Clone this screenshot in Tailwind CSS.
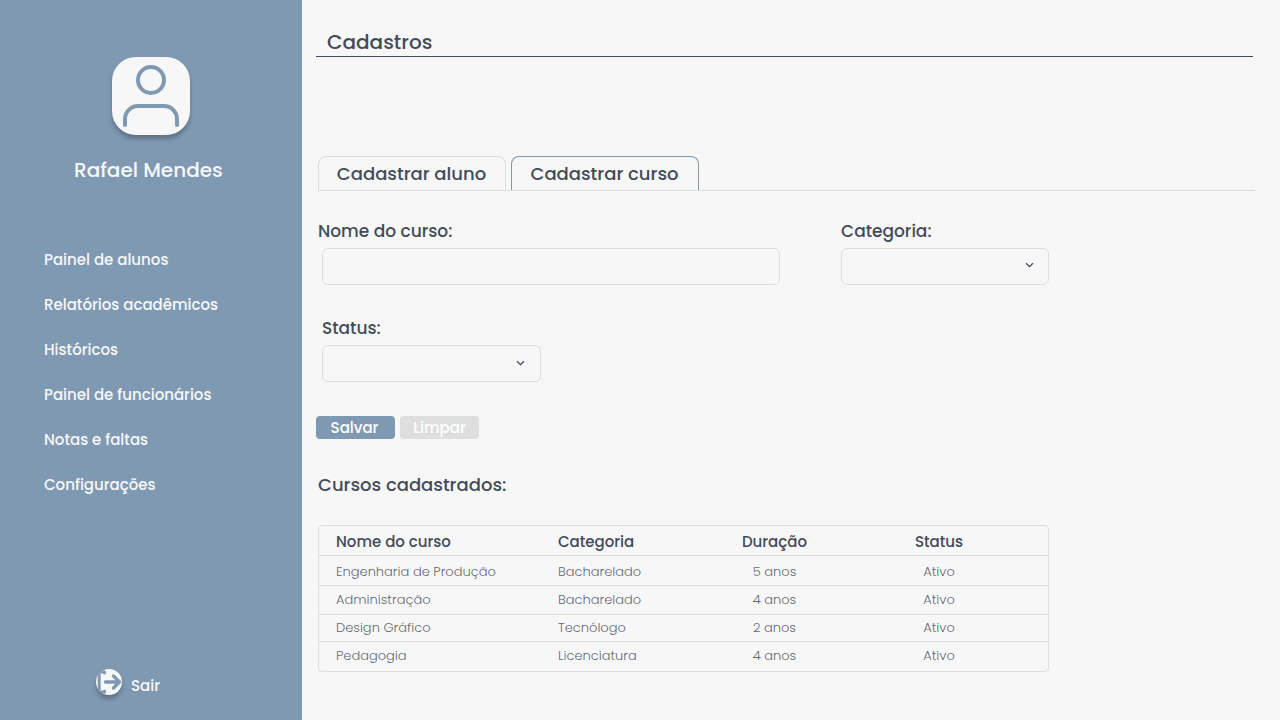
<!DOCTYPE html>
<html lang="pt-BR">
<head>
<meta charset="utf-8">
<meta name="viewport" content="width=device-width, initial-scale=1">
<title>Cadastros</title>
<script src="https://cdn.jsdelivr.net/npm/@tailwindcss/browser@4"></script>
</head>
<body class="flex min-h-screen bg-[#f7f7f7] font-['Poppins','Inter',sans-serif] font-medium text-[#434b57] antialiased">
<aside class="flex w-[302px] shrink-0 flex-col bg-[#7f99b2] text-[#f7f7f7]">
  <div class="mt-[57px] ml-28 size-[78px] rounded-3xl bg-[#f7f7f7] shadow-[0_4px_4px_rgba(0,0,0,0.25)]">
    <svg viewBox="0 0 78 78" class="size-full" fill="none" stroke="#7f99b2" stroke-width="4" stroke-linecap="round" aria-hidden="true">
      <circle cx="39" cy="23" r="13"/>
      <path d="M13 68v-6a13 13 0 0 1 13-13h26a13 13 0 0 1 13 13v6"/>
    </svg>
  </div>
  <p class="mt-5 pl-[74px] text-[20px] leading-[30px]">Rafael Mendes</p>
  <nav class="mt-[63px] flex flex-col gap-[21px] pl-11 text-[15px] leading-6">
    <a href="#">Painel de alunos</a>
    <a href="#">Relatórios acadêmicos</a>
    <a href="#">Históricos</a>
    <a href="#">Painel de funcionários</a>
    <a href="#">Notas e faltas</a>
    <a href="#">Configurações</a>
  </nav>
  <a href="#" class="mt-auto mb-[22px] ml-24 flex items-end gap-[9px] text-[15px] leading-6">
    <span class="mb-[3px] size-[26px] overflow-hidden rounded-full bg-[#f7f7f7] shadow-[0_4px_4px_rgba(0,0,0,0.25)]">
      <svg viewBox="0 0 26 26" class="size-full" fill="none" stroke="#7f99b2" stroke-width="3" stroke-linecap="round" stroke-linejoin="round" aria-hidden="true">
        <path d="M8.500 4V3H3.200v20h5.300v-1"/>
        <path d="M9.500 13h14M17.500 7l6 6-6 6" stroke-width="3.400"/>
      </svg>
    </span>
    Sair
  </a>
</aside>
<main class="flex-1 pr-[27px] pl-[14px]">
  <h1 class="border-b border-[#434b63] pt-7 pl-[11px] text-[20px] leading-7">Cadastros</h1>
  <div role="tablist" class="mt-[99px] -mr-[2px] ml-[2px] flex gap-[5px] border-b border-[#dedede] text-[18px] leading-[33px]">
    <button role="tab" aria-selected="false" class="w-[188px] rounded-t-lg border border-b-0 border-[#dedede] pr-px">Cadastrar aluno</button>
    <button role="tab" aria-selected="true" class="w-[188px] rounded-t-lg border border-b-0 border-[#7f99b2] pr-px">Cadastrar curso</button>
  </div>
  <form>
    <div class="mt-[27px] flex gap-[61px]">
      <div class="w-[464px] shrink pl-[2px]">
        <label for="nome" class="block text-[17px] leading-[26px]">Nome do curso:</label>
        <input id="nome" type="text" class="mt-1 ml-1 block h-[37px] w-[458px] rounded-md border border-[#dedede] px-3">
      </div>
      <div class="w-52">
        <label for="categoria" class="block text-[17px] leading-[26px]">Categoria:</label>
        <div class="relative mt-1">
          <select id="categoria" class="block h-[37px] w-full appearance-none rounded-md border border-[#dedede] px-3"><option></option><option>Bacharelado</option><option>Tecnólogo</option><option>Licenciatura</option></select>
          <svg viewBox="0 0 10 6" class="pointer-events-none absolute top-[14px] right-[14px] h-[6px] w-[10px]" fill="none" stroke="currentColor" stroke-width="1.300" aria-hidden="true"><path d="M1 1.200 4.500 4.700 8 1.200"/></svg>
        </div>
      </div>
    </div>
    <div class="mt-[30px] ml-[6px] w-[219px]">
      <label for="status" class="block text-[17px] leading-[26px]">Status:</label>
      <div class="relative mt-1">
        <select id="status" class="block h-[37px] w-full appearance-none rounded-md border border-[#dedede] px-3"><option></option><option>Ativo</option><option>Inativo</option></select>
        <svg viewBox="0 0 10 6" class="pointer-events-none absolute top-[15px] right-[15px] h-[6px] w-[10px]" fill="none" stroke="currentColor" stroke-width="1.300" aria-hidden="true"><path d="M1 1.200 4.500 4.700 8 1.200"/></svg>
      </div>
    </div>
    <div class="mt-[34px] flex gap-[5px] text-[15px] leading-[23px] text-white">
      <button type="button" class="w-[79px] rounded bg-[#7f99b2] pr-[2px]">Salvar</button>
      <button type="reset" class="w-[79px] rounded bg-[#dedede]">Limpar</button>
    </div>
  </form>
  <h2 class="mt-8 ml-[2px] text-[18px] leading-7">Cursos cadastrados:</h2>
  <div class="mt-[26px] ml-[2px] w-[731px] rounded border border-[#dedede]">
    <table class="w-full table-fixed border-separate border-spacing-0 text-left text-[13px] leading-5 font-light [&_td]:border-[#dedede] [&_td]:text-[#434b57]/85 [&_th]:border-[#dedede] [&_th]:border-b">
      <colgroup><col class="w-[222px]"><col class="w-[147px]"><col class="w-[173px]"><col></colgroup>
      <thead class="text-[15px]">
        <tr class="h-[30px] *:pt-[3px]"><th class="pl-[17px] font-medium">Nome do curso</th><th class="pl-[17px] font-medium">Categoria</th><th class="text-center font-medium">Duração</th><th class="pr-[31px] text-center font-medium">Status</th></tr>
      </thead>
      <tbody>
        <tr class="h-[30px] *:border-b *:pt-[3px]"><td class="pl-[17px]">Engenharia de Produção</td><td class="pl-[17px]">Bacharelado</td><td class="text-center">5 anos</td><td class="pr-[31px] text-center">Ativo</td></tr>
        <tr class="h-[29px] *:border-b"><td class="pl-[17px]">Administração</td><td class="pl-[17px]">Bacharelado</td><td class="text-center">4 anos</td><td class="pr-[31px] text-center">Ativo</td></tr>
        <tr class="h-[27px] *:border-b"><td class="pl-[17px]">Design Gráfico</td><td class="pl-[17px]">Tecnólogo</td><td class="text-center">2 anos</td><td class="pr-[31px] text-center">Ativo</td></tr>
        <tr class="h-[29px] *:pb-[2px]"><td class="pl-[17px]">Pedagogia</td><td class="pl-[17px]">Licenciatura</td><td class="text-center">4 anos</td><td class="pr-[31px] text-center">Ativo</td></tr>
      </tbody>
    </table>
  </div>
</main>
</body>
</html>
